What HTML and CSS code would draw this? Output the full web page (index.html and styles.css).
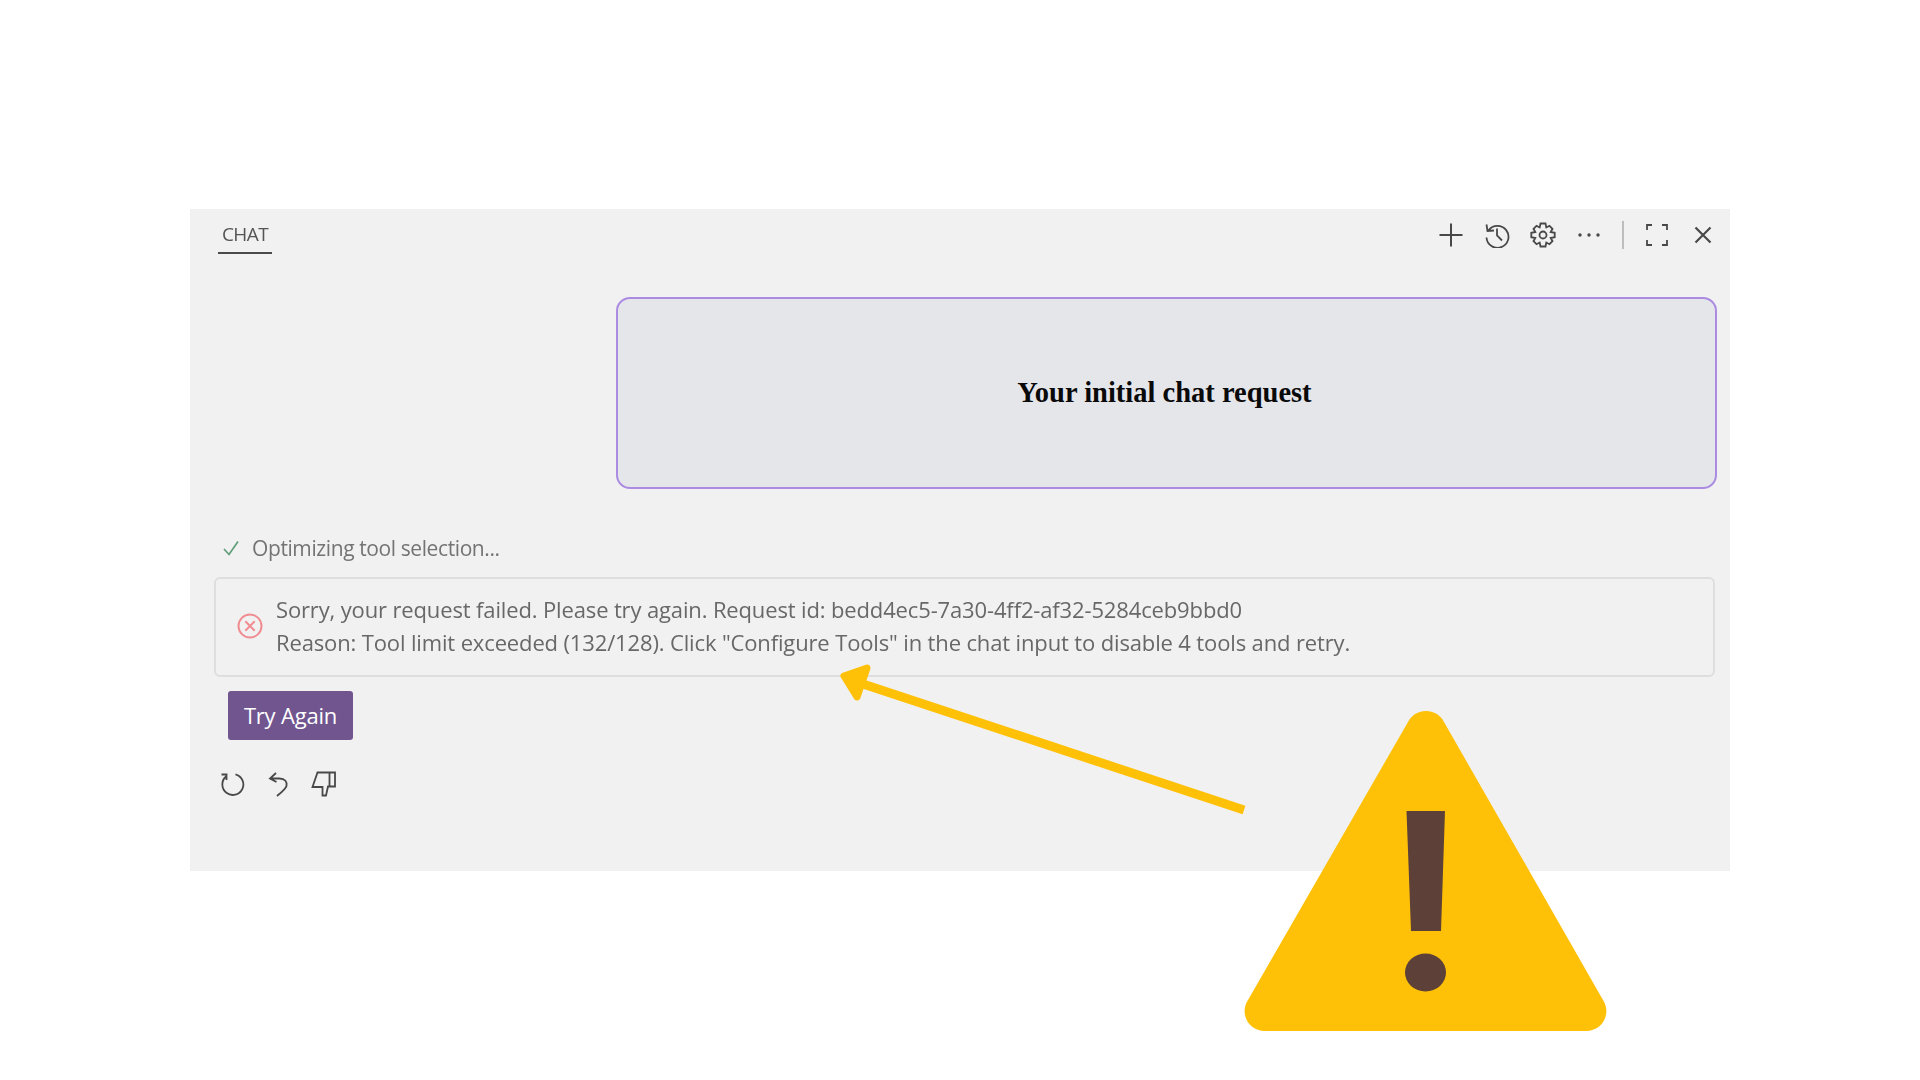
FILE: index.html
```html
<!DOCTYPE html>
<html lang="en">
<head>
<meta charset="utf-8">
<title>Chat</title>
<link rel="stylesheet" href="styles.css">
</head>
<body>
<main class="panel">
  <header class="titlebar">
    <div class="tab">CHAT</div>
    <div class="actions">
      <svg class="icon plus" viewBox="0 0 26 26"><path d="M13 1.500V24.500M1.500 13H24.500"/></svg>
      <svg class="icon" viewBox="0 0 26 26"><path d="M4.500 8.500A11 11 0 1 1 2.500 15.500M2.500 2.500L3.500 9L10 8.500M13 6.500V13.500L18 18.500"/></svg>
      <svg class="icon" viewBox="0 0 26 26"><path d="M10.500 1.500H15.500L16.300 5.500L19.500 3.800L22.500 6.800L20.700 10L24.700 10.800V15.200L20.700 16L22.500 19.200L19.500 22.200L16.300 20.500L15.500 24.500H10.500L9.700 20.500L6.500 22.200L3.500 19.200L5.300 16L1.300 15.200V10.800L5.300 10L3.500 6.800L6.500 3.800L9.700 5.500Z"/><circle cx="13" cy="13" r="3.500"/></svg>
      <svg class="icon dots" viewBox="0 0 26 26"><circle cx="4" cy="13" r="1.700"/><circle cx="13" cy="13" r="1.700"/><circle cx="22" cy="13" r="1.700"/></svg>
      <span class="divider"></span>
      <svg class="icon" viewBox="0 0 26 26"><path d="M8 3H3V8M18 3H23V8M3 18V23H8M23 18V23H18"/></svg>
      <svg class="icon close" viewBox="0 0 26 26"><path d="M5.500 5.500L20.500 20.500M20.500 5.500L5.500 20.500"/></svg>
    </div>
  </header>

  <section class="request">Your initial chat request</section>

  <p class="status">
    <svg class="check" viewBox="0 0 18 18"><path d="M2 10L7 15.500L16 2.500"/></svg>
    <span>Optimizing tool selection...</span>
  </p>

  <section class="error">
    <svg class="error-icon" viewBox="0 0 26 26"><circle cx="13" cy="13" r="11.500"/><path d="M8.300 8.300L17.700 17.700M17.700 8.300L8.300 17.700"/></svg>
    <div class="error-text">
      <div>Sorry, your request failed. Please try again. Request id: bedd4ec5-7a30-4ff2-af32-5284ceb9bbd0</div>
      <div>Reason: Tool limit exceeded (132/128). Click "Configure Tools" in the chat input to disable 4 tools and retry.</div>
    </div>
  </section>

  <button class="retry">Try Again</button>

  <div class="feedback">
    <svg class="icon" viewBox="0 0 26 26"><path d="M7 5.500A10.500 10.500 0 1 0 16.500 3.300M2.500 3.500H7.500V9"/></svg>
    <svg class="icon" viewBox="0 0 26 26"><path d="M11 2L5 7.500L11.500 11M5 7.500H14.500C20 7.500 22.500 11 21.500 15C20.800 18 17 21 12 25"/></svg>
    <svg class="icon" viewBox="0 0 26 26"><path d="M6.500 1.500H24V15.500H17L15 24.500H11.500V16H1.500ZM18.500 1.500V15.500"/></svg>
  </div>
</main>

<svg class="overlay" viewBox="0 0 1920 1080">
  <path class="arrow-line" d="M1244 810L860 683"/>
  <path class="arrow-head" d="M844 676L867 668L857 697Z"/>
  <path class="triangle" d="M1426 711C1435 711 1441 716 1444 722L1603 1000C1612 1014 1602 1031 1586 1031H1265C1249 1031 1239 1014 1248 1000L1408 722C1411 716 1417 711 1426 711Z"/>
  <path class="bang" d="M1406.500 811H1445L1441 931H1411Z"/>
  <ellipse class="bang" cx="1425.500" cy="972.500" rx="20.500" ry="19"/>
</svg>
</body>
</html>
```

FILE: styles.css
```css
* { box-sizing: border-box; }

html, body { margin: 0; background: #fff; }

body {
  position: relative;
  width: 1920px;
  height: 1080px;
  padding: 209px 190px 0;
  overflow: hidden;
  font-family: "Open Sans", "Noto Sans", sans-serif;
  color: #646464;
}

.panel {
  width: 1540px;
  height: 662px;
  background: #f1f1f1;
  display: flex;
  flex-direction: column;
  padding: 0 13px 0 24px;
}

.titlebar {
  height: 88px;
  display: flex;
  justify-content: space-between;
  align-items: flex-start;
  flex: none;
}

.tab {
  margin: 12px 0 0 4px;
  width: 54px;
  height: 33px;
  text-align: center;
  font-size: 19px;
  line-height: 27px;
  letter-spacing: -0.6px;
  color: #555;
  border-bottom: 2px solid #4a4a4a;
  filter: blur(0.4px);
}

.actions {
  display: flex;
  align-items: center;
  gap: 20px;
  margin: 12px 0 0;
  padding-right: 1px;
  filter: blur(0.4px);
}

.icon {
  width: 26px;
  height: 26px;
  flex: none;
  fill: none;
  stroke: #484848;
  stroke-width: 1.800;
}

.plus { stroke-width: 2; }

.dots { fill: #484848; stroke: none; }

.divider {
  width: 2px;
  height: 28px;
  background: #bdbdbd;
}

.close { stroke-width: 2.200; }

.request {
  width: 1101px;
  height: 192px;
  align-self: flex-end;
  flex: none;
  display: flex;
  align-items: center;
  justify-content: center;
  padding: 0 4px 0 0;
  background: #e5e6ea;
  border: 2.500px solid #ab8ce2;
  border-radius: 14px;
  font-family: "Liberation Serif", serif;
  font-weight: 700;
  font-size: 28.500px;
  color: #0a0a0a;
}

.status {
  margin: 45px 0 0 8px;
  height: 28px;
  display: flex;
  align-items: center;
  gap: 12px;
  font-size: 21px;
  letter-spacing: -0.4px;
  color: #747474;
  filter: blur(0.4px);
}

.check {
  width: 18px;
  height: 18px;
  fill: none;
  stroke: #5f9e78;
  stroke-width: 1.700;
}

.error {
  margin-top: 15px;
  width: 1501px;
  height: 100px;
  display: flex;
  align-items: center;
  gap: 13px;
  padding: 0 0 2px 21px;
  border: 2px solid #dedede;
  border-radius: 6px;
  flex: none;
}

.error-icon {
  width: 26px;
  height: 26px;
  flex: none;
  fill: none;
  stroke: #f08d92;
  stroke-width: 2;
  filter: blur(0.4px);
}

.error-text {
  font-size: 22px;
  line-height: 33.500px;
  letter-spacing: -0.14px;
  white-space: nowrap;
  color: #686868;
  filter: blur(0.4px);
}

.retry {
  margin: 14px 0 0 14px;
  padding: 0 0 2px;
  align-self: flex-start;
  width: 125px;
  height: 49px;
  border: 0;
  border-radius: 3px;
  background: #71558f;
  color: #fff;
  font-family: inherit;
  font-size: 22px;
  letter-spacing: -0.2px;
}

.feedback {
  margin: 31px 0 0 5px;
  display: flex;
  gap: 20px;
  filter: blur(0.4px);
}

.overlay {
  position: absolute;
  left: 0;
  top: 0;
  width: 1920px;
  height: 1080px;
  pointer-events: none;
}

.arrow-line { fill: none; stroke: #ffc107; stroke-width: 9; }

.arrow-head { fill: #ffc107; stroke: #ffc107; stroke-width: 7; stroke-linejoin: round; }

.triangle { fill: #ffc107; }

.bang { fill: #5d4037; }
```
